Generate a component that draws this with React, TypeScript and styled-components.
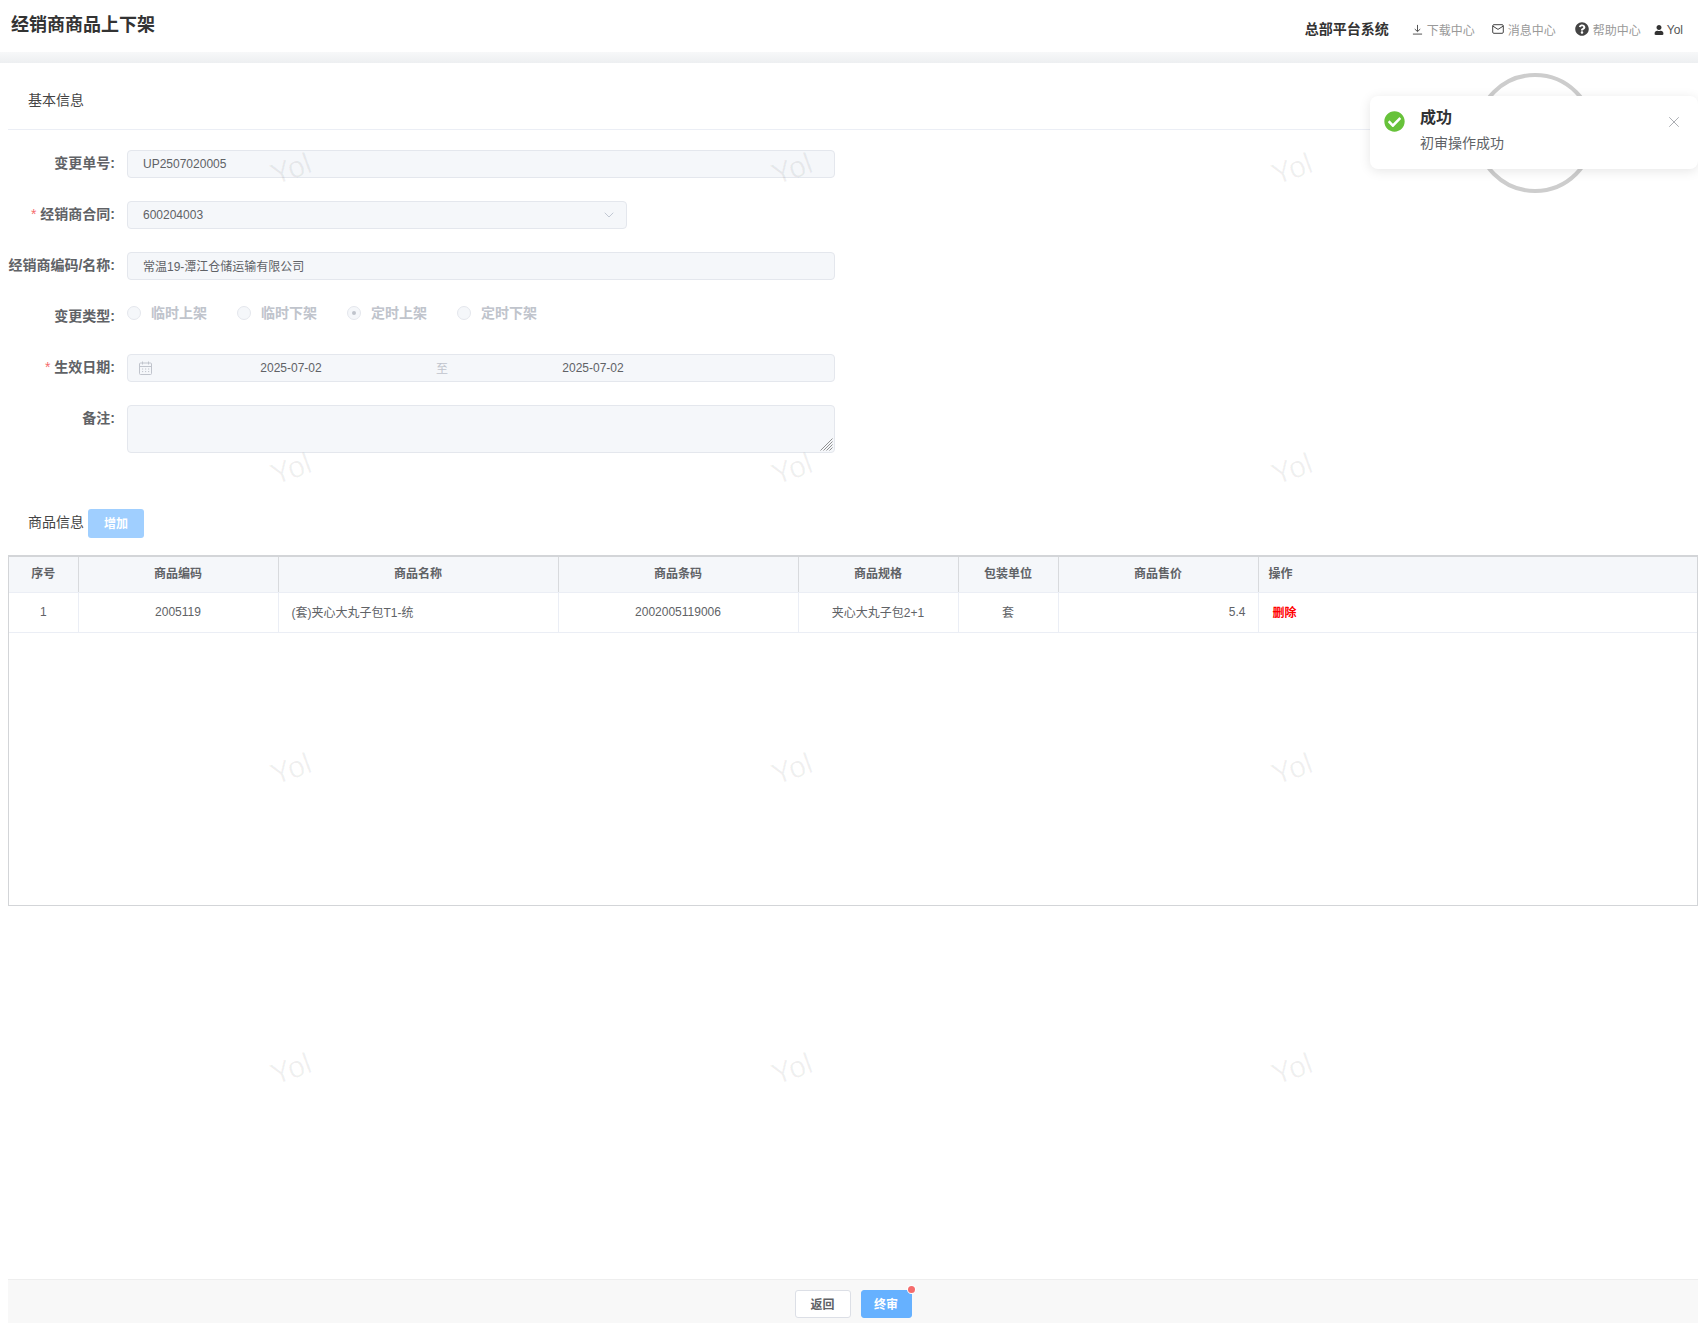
import React from "react";
import styled, { createGlobalStyle } from "styled-components";
import { FaCheckCircle, FaQuestionCircle, FaUser } from "react-icons/fa";
import { ChevronDown, X } from "lucide-react";

const Global = createGlobalStyle`
  html, body { margin: 0; padding: 0; background: #fff; }
  * { box-sizing: border-box; }
  body { font-family: "Liberation Sans", "Noto Sans CJK SC", sans-serif; color: #606266; }
`;

const Page = styled.div`
  position: relative;
  width: 1698px;
  height: 1323px;
  overflow: hidden;
  display: flex;
  flex-direction: column;
  background: #fff;
`;
const TopBar = styled.header`
  height: 52px;
  flex: none;
  display: flex;
  justify-content: space-between;
  padding: 0 15px 0 11px;
  background: #fff;
`;
const PageTitle = styled.h1`
  margin: 14px 0 0;
  font-size: 18px;
  line-height: 22px;
  font-weight: 700;
  color: #333;
`;
const TopNav = styled.nav`
  display: flex;
  align-items: center;
  padding-top: 6px;
`;
const SystemName = styled.span`
  font-size: 14px;
  font-weight: 700;
  color: #333;
  margin: 0 23px 2px 0;
`;
const NavLink = styled.span<{ $gap: number }>`
  display: inline-flex;
  align-items: center;
  gap: 4px;
  font-size: 12px;
  color: #999;
  margin-right: ${(p) => p.$gap}px;
  svg { color: #444; flex: none; }
`;
const UserName = styled.span`
  display: inline-flex;
  align-items: center;
  gap: 3px;
  margin-top: 2px;
  font-size: 12px;
  color: #555;
  svg { color: #333; }
`;
const Band = styled.div`
  height: 11px;
  flex: none;
  background: linear-gradient(#f7f8f9, #edeff1);
`;
const Content = styled.main`
  flex: 1;
  display: flex;
  flex-direction: column;
  padding-left: 8px;
`;
const SectionHead = styled.div`
  height: 67px;
  flex: none;
  display: flex;
  align-items: center;
  padding: 5px 0 0 20px;
  font-size: 14px;
  color: #444;
  border-bottom: 1px solid #ebeef5;
`;
const Form = styled.div`
  display: flex;
  flex-direction: column;
  gap: 23px;
  padding-top: 20px;
`;
const Row = styled.div`
  display: flex;
  gap: 12px;
`;
const RadioRow = styled(Row)`
  height: 28px;
`;
const Label = styled.label`
  width: 107px;
  flex: none;
  text-align: right;
  font-size: 14px;
  font-weight: 700;
  line-height: 26px;
  color: #606266;
  white-space: nowrap;
  em { font-style: normal; color: #f56c6c; margin-right: 4px; font-weight: 400; }
`;
const Field = styled.div<{ $w?: number; $cjk?: boolean }>`
  width: ${(p) => p.$w ?? 708}px;
  height: 28px;
  display: flex;
  align-items: center;
  padding: 0 15px ${(p) => (p.$cjk ? "2px" : "0")};
  background: #f5f7fa;
  border: 1px solid #e4e7ed;
  border-radius: 4px;
  font-size: 12px;
  color: #606266;
`;
const SelectField = styled(Field)`
  justify-content: space-between;
  padding-right: 9px;
  svg { color: #a8b0c0; }
`;
const Radios = styled.div`
  display: flex;
  gap: 30px;
  height: 28px;
  align-items: center;
  margin-top: -5px;
`;
const RadioItem = styled.span`
  display: inline-flex;
  align-items: center;
  gap: 10px;
  font-size: 14px;
  font-weight: 700;
  color: #c0c4cc;
`;
const RadioDot = styled.i<{ $on?: boolean }>`
  width: 14px;
  height: 14px;
  border-radius: 50%;
  background: #f5f7fa;
  border: 1px solid #e4e7ed;
  display: inline-flex;
  align-items: center;
  justify-content: center;
  transform: translateY(1px);
  &::after {
    content: "";
    width: 4px;
    height: 4px;
    border-radius: 50%;
    background: ${(p) => (p.$on ? "#c0c4cc" : "transparent")};
  }
`;
const DateField = styled(Field)`
  padding: 0 0 0 11px;
  svg { flex: none; color: #c0c4cc; margin-right: 4px; }
`;
const DateValue = styled.span`
  width: 270px;
  text-align: center;
`;
const DateSep = styled.span`
  width: 32px;
  text-align: center;
  color: #c0c4cc;
  padding-bottom: 2px;
`;
const NoteBox = styled.div`
  position: relative;
  width: 708px;
  height: 48px;
`;
const NoteArea = styled.textarea`
  display: block;
  width: 100%;
  height: 100%;
  margin: 0;
  padding: 5px 15px;
  background: #f5f7fa;
  border: 1px solid #e4e7ed;
  border-radius: 4px;
  resize: none;
  outline: none;
`;
const Resizer = styled.svg`
  position: absolute;
  right: 2px;
  bottom: 2px;
`;
const GoodsHead = styled.div`
  display: flex;
  align-items: center;
  gap: 4px;
  margin-top: 56px;
  padding-left: 20px;
  font-size: 14px;
  color: #444;
`;
const GoodsTitle = styled.span`
  margin-bottom: 6px;
`;
const AddButton = styled.button`
  width: 56px;
  height: 29px;
  padding: 0 0 2px;
  border: 0;
  border-radius: 3px;
  background: #a0cfff;
  color: #fff;
  font: 700 12px "Liberation Sans", "Noto Sans CJK SC", sans-serif;
`;
const TableWrap = styled.div`
  margin-top: 17px;
  height: 351px;
  border: 1px solid #d3d5d8;
  border-top-width: 2px;
  flex: none;
`;
const Table = styled.table`
  width: 100%;
  table-layout: fixed;
  border-collapse: collapse;
  font-size: 12px;
`;
const Th = styled.th<{ $left?: boolean }>`
  height: 35px;
  padding: 0 ${(p) => (p.$left ? "10px" : "0")} 3px;
  background: #f5f7fa;
  color: #606266;
  font-weight: 700;
  text-align: ${(p) => (p.$left ? "left" : "center")};
  border-right: 1px solid #d8dadd;
  border-bottom: 1px solid #ebeef5;
  &:last-child { border-right: 0; }
`;
const Td = styled.td<{ $align?: string; $cjk?: boolean }>`
  height: 40px;
  padding: 0 12px ${(p) => (p.$cjk ? "2px" : "0")} ${(p) => (p.$align === "left" ? "13px" : "12px")};
  color: #606266;
  text-align: ${(p) => p.$align ?? "center"};
  border-right: 1px solid #ebeef5;
  border-bottom: 1px solid #ebeef5;
  &:last-child { border-right: 0; }
`;
const DeleteLink = styled.span`
  margin-left: 1px;
  color: #f00;
  font-weight: 700;
`;
const Footer = styled.footer`
  margin-top: auto;
  height: 44px;
  flex: none;
  display: flex;
  justify-content: center;
  gap: 10px;
  padding: 10px 0 0 0;
  background: #f8f8f8;
  border-top: 1px solid #eeeeee;
`;
const FootButton = styled.button<{ $primary?: boolean }>`
  position: relative;
  width: ${(p) => (p.$primary ? 51 : 56)}px;
  height: 28px;
  padding: 0 0 2px;
  border-radius: 3px;
  border: 1px solid ${(p) => (p.$primary ? "#66b1ff" : "#dcdfe6")};
  background: ${(p) => (p.$primary ? "#66b1ff" : "#fff")};
  color: ${(p) => (p.$primary ? "#fff" : "#606266")};
  font: 700 12px "Liberation Sans", "Noto Sans CJK SC", sans-serif;
`;
const BadgeDot = styled.i`
  position: absolute;
  top: -5px;
  right: -4px;
  width: 7px;
  height: 7px;
  border-radius: 50%;
  background: #f56c6c;
  box-shadow: 0 0 0 1px #fff;
`;
const Spinner = styled.div`
  position: absolute;
  left: 1475px;
  top: 73px;
  width: 120px;
  height: 120px;
  border-radius: 50%;
  border: 4px solid #cdcdcd;
`;
const Toast = styled.div`
  position: absolute;
  left: 1370px;
  top: 96px;
  width: 328px;
  height: 73px;
  display: flex;
  padding: 13px 14px 0 14px;
  background: #fff;
  border-radius: 8px;
  box-shadow: 0 2px 12px rgba(0, 0, 0, 0.1);
`;
const ToastIcon = styled.span`
  flex: none;
  width: 21px;
  height: 21px;
  margin: 2px 0 0 0;
  color: #67c23a;
  svg { display: block; }
`;
const ToastBody = styled.div`
  margin-left: 15px;
  flex: 1;
`;
const ToastTitle = styled.div`
  font-size: 16px;
  font-weight: 700;
  line-height: 18px;
  color: #303133;
`;
const ToastText = styled.div`
  margin-top: 6px;
  font-size: 14px;
  line-height: 21px;
  color: #606266;
`;
const ToastClose = styled.span`
  flex: none;
  margin: 4px 1px 0 0;
  color: #909399;
  svg { display: block; }
`;
const Watermarks = styled.div`
  position: absolute;
  left: 41px;
  top: 19px;
  display: grid;
  grid-template-columns: repeat(3, 500.5px);
  grid-auto-rows: 300px;
  pointer-events: none;
`;
const Mark = styled.span`
  display: flex;
  align-items: center;
  justify-content: center;
  height: 300px;
  width: 500px;
  font-size: 30px;
  font-weight: 400;
  color: rgba(0, 0, 0, 0.06);
  transform: rotate(-20deg);
`;

const DownloadIcon = () => (
  <svg width="11" height="11" viewBox="0 0 12 12" fill="none" stroke="currentColor" strokeWidth="1">
    <path d="M6 1v7M3 5.5 6 8.3 9 5.5M1 11h10" />
  </svg>
);
const MailIcon = () => (
  <svg width="12" height="12" viewBox="0 0 12 12" fill="none" stroke="currentColor" strokeWidth="1">
    <rect x="0.7" y="1.7" width="10.6" height="8.6" rx="1.2" />
    <path d="M1 3.2 6 6.4 11 3.2" />
  </svg>
);
const CalendarIcon = () => (
  <svg width="13" height="14" viewBox="0 0 13 14" fill="none" stroke="currentColor" strokeWidth="1">
    <rect x="0.5" y="2" width="12" height="11.5" rx="1" />
    <path d="M0.5 5.5h12M3.5 0.5v3M9.5 0.5v3M3 8h1.2M6 8h1.2M9 8h1.2M3 10.6h1.2M6 10.6h1.2M9 10.6h1.2" />
  </svg>
);

const columns = [69, 200, 280, 240, 160, 100, 200];

export default function App() {
  return (
    <Page>
      <Global />
      <TopBar>
        <PageTitle>经销商商品上下架</PageTitle>
        <TopNav>
          <SystemName>总部平台系统</SystemName>
          <NavLink $gap={17}><DownloadIcon />下载中心</NavLink>
          <NavLink $gap={19}><MailIcon />消息中心</NavLink>
          <NavLink $gap={13}><FaQuestionCircle size={14} />帮助中心</NavLink>
          <UserName><FaUser size={10} />Yol</UserName>
        </TopNav>
      </TopBar>
      <Band />
      <Content>
        <SectionHead>基本信息</SectionHead>
        <Form>
          <Row>
            <Label>变更单号:</Label>
            <Field>UP2507020005</Field>
          </Row>
          <Row>
            <Label><em>*</em>经销商合同:</Label>
            <SelectField $w={500}>600204003<ChevronDown size={16} strokeWidth={1} /></SelectField>
          </Row>
          <Row>
            <Label>经销商编码/名称:</Label>
            <Field $cjk>常温19-潭江仓储运输有限公司</Field>
          </Row>
          <RadioRow>
            <Label>变更类型:</Label>
            <Radios>
              <RadioItem><RadioDot />临时上架</RadioItem>
              <RadioItem><RadioDot />临时下架</RadioItem>
              <RadioItem><RadioDot $on />定时上架</RadioItem>
              <RadioItem><RadioDot />定时下架</RadioItem>
            </Radios>
          </RadioRow>
          <Row>
            <Label><em>*</em>生效日期:</Label>
            <DateField>
              <CalendarIcon />
              <DateValue>2025-07-02</DateValue>
              <DateSep>至</DateSep>
              <DateValue>2025-07-02</DateValue>
            </DateField>
          </Row>
          <Row>
            <Label>备注:</Label>
            <NoteBox>
              <NoteArea disabled />
              <Resizer width="13" height="13" viewBox="0 0 13 13" stroke="#777" strokeWidth="0.8">
                <path d="M0.5 12.5 12.5 0.5M3.5 12.5 12.5 3.5M6.5 12.5 12.5 6.5M9.5 12.5 12.5 9.5" />
              </Resizer>
            </NoteBox>
          </Row>
        </Form>
        <GoodsHead><GoodsTitle>商品信息</GoodsTitle><AddButton>增加</AddButton></GoodsHead>
        <TableWrap>
          <Table>
            <colgroup>
              {columns.map((w, i) => <col key={i} width={w} />)}
              <col />
            </colgroup>
            <thead>
              <tr>
                <Th>序号</Th>
                <Th>商品编码</Th>
                <Th>商品名称</Th>
                <Th>商品条码</Th>
                <Th>商品规格</Th>
                <Th>包装单位</Th>
                <Th>商品售价</Th>
                <Th $left>操作</Th>
              </tr>
            </thead>
            <tbody>
              <tr>
                <Td>1</Td>
                <Td>2005119</Td>
                <Td $align="left" $cjk>(套)夹心大丸子包T1-统</Td>
                <Td>2002005119006</Td>
                <Td $cjk>夹心大丸子包2+1</Td>
                <Td $cjk>套</Td>
                <Td $align="right">5.4</Td>
                <Td $align="left" $cjk><DeleteLink>删除</DeleteLink></Td>
              </tr>
            </tbody>
          </Table>
        </TableWrap>
        <Footer>
          <FootButton>返回</FootButton>
          <FootButton $primary>终审<BadgeDot /></FootButton>
        </Footer>
      </Content>
      <Watermarks>
        {Array.from({ length: 12 }).map((_, i) => <Mark key={i}>Yol</Mark>)}
      </Watermarks>
      <Spinner />
      <Toast>
        <ToastIcon><FaCheckCircle size={21} /></ToastIcon>
        <ToastBody>
          <ToastTitle>成功</ToastTitle>
          <ToastText>初审操作成功</ToastText>
        </ToastBody>
        <ToastClose><X size={18} strokeWidth={1} /></ToastClose>
      </Toast>
    </Page>
  );
}
